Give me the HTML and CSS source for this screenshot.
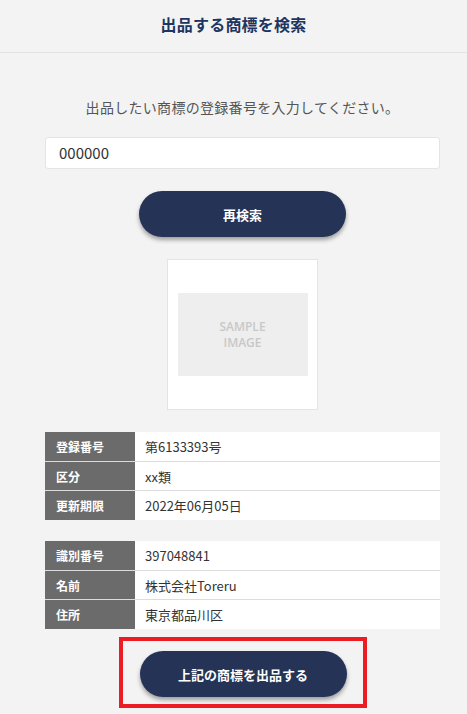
FILE: index.html
```html
<!DOCTYPE html>
<html lang="ja">
<head>
<meta charset="utf-8">
<title>出品する商標を検索</title>
<link rel="stylesheet" href="styles.css">
</head>
<body>
<header class="header">
  <h1 class="header-title">出品する商標を検索</h1>
</header>
<main class="main">
  <p class="lead">出品したい商標の登録番号を入力してください。</p>
  <div class="input-box">000000</div>
  <button class="btn">再検索</button>
  <div class="image-frame">
    <div class="image-placeholder">SAMPLE<br>IMAGE</div>
  </div>
  <div class="info-table">
    <div class="info-row"><div class="info-label">登録番号</div><div class="info-value">第6133393号</div></div>
    <div class="info-row"><div class="info-label">区分</div><div class="info-value">xx類</div></div>
    <div class="info-row"><div class="info-label">更新期限</div><div class="info-value">2022年06月05日</div></div>
  </div>
  <div class="info-table second">
    <div class="info-row"><div class="info-label">識別番号</div><div class="info-value">397048841</div></div>
    <div class="info-row"><div class="info-label">名前</div><div class="info-value">株式会社Toreru</div></div>
    <div class="info-row"><div class="info-label">住所</div><div class="info-value">東京都品川区</div></div>
  </div>
  <div class="highlight">
    <button class="btn">上記の商標を出品する</button>
  </div>
</main>
</body>
</html>
```
FILE: styles.css
```css
html, body {
  margin: 0;
  padding: 0;
}
body {
  background: #f3f3f3;
  font-family: "Noto Sans CJK JP", "Noto Sans", sans-serif;
  color: #333;
  width: 467px;
  height: 714px;
  overflow: hidden;
}
.header {
  height: 53px;
  box-sizing: border-box;
  border-bottom: 1px solid #e2e2e2;
  display: flex;
  align-items: center;
  justify-content: center;
  padding-bottom: 4px;
}
.header-title {
  margin: 0;
  font-size: 16px;
  font-weight: 700;
  color: #1d3560;
  letter-spacing: 0.2px;
}
.main {
  margin: 0 27px 0 45px;
  display: flex;
  flex-direction: column;
  align-items: center;
}
.lead {
  margin: 44px 0 0;
  font-size: 14px;
  line-height: 20px;
  color: #555;
  letter-spacing: 0.3px;
}
.input-box {
  margin-top: 20px;
  align-self: stretch;
  height: 32px;
  box-sizing: border-box;
  background: #fff;
  border: 1px solid #e4e4e4;
  border-radius: 3px;
  padding-left: 13px;
  font-size: 15px;
  line-height: 30px;
  color: #333;
}
.btn {
  width: 207px;
  height: 46px;
  border: none;
  border-radius: 23px;
  background: #243356;
  color: #fff;
  font-family: "Noto Sans CJK JP", "Noto Sans", sans-serif;
  font-size: 13px;
  font-weight: 700;
  box-shadow: 0 3px 4px rgba(0, 0, 0, 0.35);
  padding: 0;
}
.main > .btn {
  margin-top: 22px;
}
.image-frame {
  margin-top: 22px;
  width: 151px;
  height: 151px;
  box-sizing: border-box;
  background: #fff;
  border: 1px solid #e4e4e4;
  display: flex;
  align-items: center;
  justify-content: center;
}
.image-placeholder {
  width: 130px;
  height: 83px;
  background: #eeeeee;
  color: #c8c8c8;
  font-family: "Open Sans", "Liberation Sans", sans-serif;
  font-size: 12px;
  font-weight: 600;
  line-height: 16px;
  text-align: center;
  display: flex;
  align-items: center;
  justify-content: center;
}
.info-table {
  margin-top: 22px;
  align-self: stretch;
  display: flex;
  flex-direction: column;
  gap: 1px;
  background: #dcdcdc;
}
.info-table.second {
  margin-top: 21px;
}
.info-row {
  display: flex;
  height: 28px;
  background: #fff;
}
.info-row:first-child,
.info-row:last-child {
  height: 29px;
}
.info-label {
  width: 90px;
  flex: none;
  background: #6b6b6b;
  color: #fff;
  font-size: 12px;
  font-weight: 700;
  padding-left: 11px;
  box-sizing: border-box;
  display: flex;
  align-items: center;
}
.info-value {
  padding-left: 10px;
  font-size: 13px;
  color: #333;
  display: flex;
  align-items: center;
}
.highlight {
  margin-top: 8px;
  border: 4px solid #ec1c24;
  padding: 10px 16px 7px 17px;
  display: flex;
}
```
